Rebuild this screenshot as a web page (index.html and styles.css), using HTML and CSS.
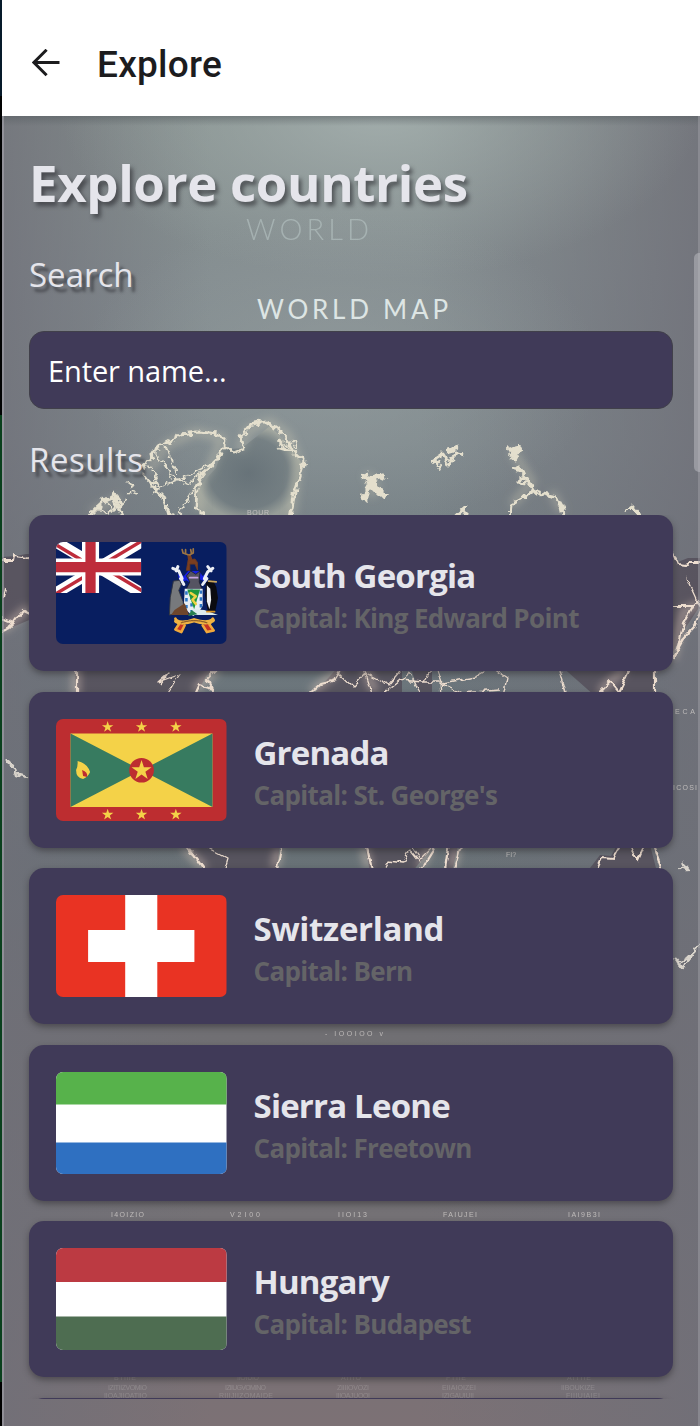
FILE: index.html
```html
<!DOCTYPE html>
<html lang="en">
<head>
<meta charset="utf-8">
<title>Explore</title>
<link rel="stylesheet" href="styles.css">
</head>
<body>
<div class="screen">
  <header class="appbar">
    <svg class="back" viewBox="0 0 28 28" width="28" height="28"><path d="M27.500 13.500H2.500M14.600 .800L1.900 13.500L14.600 26.200" fill="none" stroke="#1c1c1e" stroke-width="3"/></svg>
    <h1 class="appbar-title">Explore</h1>
  </header>
  <main class="content">
    <svg class="map" viewBox="0 116 700 1310" width="700" height="1310" aria-hidden="true">
      <defs>
        <linearGradient id="base" x1="0" y1="0" x2="0" y2="1">
          <stop offset="0" stop-color="#87928f"/><stop offset=".12" stop-color="#848d90"/><stop offset=".25" stop-color="#7f898d"/><stop offset=".42" stop-color="#6c767c"/><stop offset=".58" stop-color="#687176"/><stop offset=".7" stop-color="#706f73"/><stop offset=".84" stop-color="#747175"/><stop offset="1" stop-color="#7c7175"/>
        </linearGradient>
        <linearGradient id="edge" x1="0" y1="0" x2="1" y2="0">
          <stop offset="0" stop-color="#6f6f78" stop-opacity=".75"/><stop offset=".3" stop-color="#6f6f78" stop-opacity="0"/><stop offset=".6" stop-color="#6f6f78" stop-opacity="0"/><stop offset="1" stop-color="#6f6f78" stop-opacity=".8"/>
        </linearGradient>
        <radialGradient id="lamp" gradientUnits="userSpaceOnUse" cx="0" cy="0" r="1" gradientTransform="translate(380 110) scale(320 170)">
          <stop offset="0" stop-color="#a9b4b3" stop-opacity=".8"/><stop offset="1" stop-color="#a0aaab" stop-opacity="0"/>
        </radialGradient>
        <radialGradient id="mid" gradientUnits="userSpaceOnUse" cx="0" cy="0" r="1" gradientTransform="translate(340 370) scale(260 160)">
          <stop offset="0" stop-color="#99a2a3" stop-opacity=".55"/><stop offset="1" stop-color="#99a2a3" stop-opacity="0"/>
        </radialGradient>
        <linearGradient id="shade" x1="0" y1="0" x2="0" y2="1"><stop offset="0" stop-color="#555c60" stop-opacity=".5"/><stop offset="1" stop-color="#555c60" stop-opacity="0"/></linearGradient>
        <radialGradient id="sea"><stop offset="0" stop-color="#5d6970"/><stop offset=".75" stop-color="#6f7a7e"/><stop offset="1" stop-color="#a3a89f"/></radialGradient>
        <filter id="rough" x="-10%" y="-10%" width="120%" height="120%"><feTurbulence type="fractalNoise" baseFrequency=".16" numOctaves="2" seed="4"/><feDisplacementMap in="SourceGraphic" scale="9" xChannelSelector="R" yChannelSelector="G"/></filter>
        <filter id="wavy" x="-5%" y="-5%" width="110%" height="110%"><feTurbulence type="fractalNoise" baseFrequency=".12" numOctaves="2" seed="9"/><feDisplacementMap in="SourceGraphic" scale="6" xChannelSelector="R" yChannelSelector="G"/></filter>
        <filter id="glow" x="-20%" y="-20%" width="140%" height="140%"><feGaussianBlur stdDeviation="4"/></filter>
      </defs>
      <rect y="116" width="700" height="1310" fill="url(#base)"/>
      <rect y="116" width="700" height="1310" fill="url(#edge)"/>
      <rect y="116" width="700" height="320" fill="url(#lamp)"/>
      <rect y="200" width="700" height="330" fill="url(#mid)"/>
      <rect y="116" width="700" height="10" fill="url(#shade)"/>
      <text class="ghost faint" x="246" y="240" textLength="123">WORLD</text>
      <text class="ghost" x="257" y="319" textLength="191">WORLD MAP</text>

      <path fill="url(#sea)" fill-opacity=".7" d="M200 520L196 490L216 468L222 450L242 448L270 426L290 446L301 462L292 520Z"/>
      <g fill="none" stroke="#d4cfb9" stroke-opacity=".4" stroke-width="7" filter="url(#glow)">
        <path d="M150 470L166 445L196 432L222 438L210 468L198 485L200 510M240 450L248 430L270 422L288 435L298 460L292 515M366 474L376 486L370 496M512 450L532 482L512 505M552 492L562 512M92 512L120 498"/>
      </g>
      <g fill="none" stroke="#e4dfcd" stroke-linejoin="round" filter="url(#rough)">
        <path stroke-width="2.800" d="M88 520Q97 502 114 498L124 520M143 468L156 449L173 440L181 434L198 432L219 434L225 441L222 453L210 467L201 475L197 489L196 507L205 516M224 446L236 452L244 449L241 436L250 425L265 421L281 432L289 443L294 454L304 461L298 482L294 494L291 520M102 502L114 494L121 505M144 474L154 487L164 497L170 518M278 439L286 451M279 448L293 452"/>
        <path stroke-width="1.600" d="M154 452L162 460L172 477L190 484L202 472M166 447L177 473M174 520L200 481L219 455M156 488L187 476L215 462M148 465L158 477L151 486L164 500L173 518M101 498L114 510L126 500M92 516L100 508L108 516L116 506M126 482L134 488M128 492L138 494M148 480L160 486L152 494M286 446L294 440L296 450M282 442L298 456"/>
        <path stroke-width="6" d="M361 474L370 479L385 475M373 479L366 492L364 501M370 482L386 498M507 451L519 448L514 458"/>
        <path stroke-width="3" d="M434 458L440 466L438 471M431 462L443 454L450 465L456 452L464 455M445 451L459 447M507 448L515 459M512 468L525 472L519 482L534 484M516 466L527 479L534 491L543 494L557 497L562 506L565 520M536 490L525 496L511 504L510 520M452 520L466 507L464 518M625 512L632 507L640 516"/>
      </g>

      <g fill="#514b57" fill-opacity=".75"><path d="M2 557L16 556L26 554H34V618L15 626L2 630ZM668 546L678 562L688 558H700V606L684 630L668 662ZM75 665H220L206 676L196 696H76ZM340 665H402V696H312ZM410 665H432V696H420ZM560 665H655V696H595ZM184 845L206 872H276L280 845ZM365 845L370 872H412L434 845ZM448 845L444 872H452L458 845ZM587 872L600 855L611 856L617 845H650L657 872Z"/></g>
      <g fill="none" stroke="#ecd5c5" stroke-width="8" stroke-opacity=".45" filter="url(#glow)"><path d="M76 665V696M218 668L195 690M340 668L312 692M365 668L375 692M600 692L625 668M184 847L205 869M279 847L275 868M364 847L369 868M430 847L420 868M457 847L452 868M672 659L684 611L700 604M2 630L28 608"/></g>
      <g fill="none" stroke="#edddcf" stroke-width="2.200" stroke-linejoin="round" filter="url(#wavy)">
        <path d="M2 560H13L14 555L22 556L24 559L34 557M0 632Q10 630 17 618L24 610L34 615M6 588L4 599M2 618L12 622L8 629M670 546L678 565L686 566L690 561H704M670 606H693L684 623L674 660M693 606L698 601L702 608L694 627L683 639L670 661M77 662V700M224 662L207 679L212 689L199 685L192 700M306 698L321 684L333 681L345 662M592 700L610 681L619 692L634 662M655 662V700M184 842L209 876M282 842L276 876M366 842L373 876M438 842L422 868L412 876M449 842L444 876M462 842L452 876M583 873L597 869L602 858L613 859L622 842M628 842L638 860L646 842M652 842L664 876"/>
        <path stroke-width="1.300" d="M160 684L168 673L158 682L180 674L165 696M338 673L353 687L366 673L389 685L406 665M363 665L373 696M380 696L400 680L423 682L431 668M403 682L409 672L422 696M420 682H440L441 696M436 665L442 683L475 677L491 668M440 683L462 693L500 690M488 665L507 678L503 696M560 670L567 696M207 847L228 858L224 872M382 872L388 861L403 863L410 850L420 862M412 847L420 859L431 848M686 577L698 603"/>
      </g>
      <g fill="none" stroke="#d8d3cb" stroke-width="2.500" stroke-linejoin="round" filter="url(#rough)"><path d="M6 760L13 767L15 774L29 778M677 964L687 958L706 939M675 959L682 968L694 954M680 868L688 870L683 863"/></g>
      <g class="caption">
        <text x="247" y="515" textLength="22">BQUR</text><text x="675" y="714" textLength="20">ECA</text><text x="673" y="790" textLength="24">ICOSI</text><text x="506" y="857">FI?</text><text x="325" y="1036" textLength="58">- IOOIOO v</text>
        <text x="111" y="1217" textLength="33">I4OIZIO</text><text x="230" y="1217" textLength="30">V2I00</text><text x="338" y="1217" textLength="29">IIOI13</text><text x="443" y="1217" textLength="34">FAIUJEI</text><text x="568" y="1217" textLength="32">IAI9B3I</text>
      </g>
      <g class="caption dim">
        <text x="114" y="1380" textLength="22">BTIIIE</text><text x="237" y="1380" textLength="22">IIOIUIO</text><text x="341" y="1380" textLength="20">AIIIO</text><text x="446" y="1380" textLength="20">FTIIE</text><text x="567" y="1380" textLength="24">AITIIE</text>
        <text x="108" y="1390" textLength="39">IZITIIZVOMIO</text><text x="225" y="1390" textLength="41">IZIIUGVOMINO</text><text x="337" y="1390" textLength="32">ZIIIIOVOZI</text><text x="442" y="1390" textLength="34">EIIAIOIZEI</text><text x="561" y="1390" textLength="34">IIBOUKIZE</text>
        <text x="104" y="1398" textLength="43">IIOAJIIOATIIO</text><text x="219" y="1398" textLength="54">RIIIJIIZOMAIDE</text><text x="336" y="1398" textLength="34">IIIOAJUOOI</text><text x="442" y="1398" textLength="32">IZIGAUIUII</text><text x="566" y="1398" textLength="34">FIIIUIAIEI</text>
      </g>
      <rect x="2" y="116" width="2" height="1310" fill="#a5a4ab" fill-opacity=".6"/>
      <rect x="698" y="116" width="2" height="1310" fill="#a5a4ab" fill-opacity=".45"/>
    </svg>
    <h2 class="title">Explore countries</h2>
    <p class="label search-label">Search</p>
    <div class="field">Enter name...</div>
    <p class="label results-label">Results</p>
    <div class="list">
      <article class="card">
        <svg class="flag" viewBox="0 0 200 120" preserveAspectRatio="none">
          <path fill="#081e60" d="M0 0H200V120H0Z"/>
          <svg width="100" height="60" viewBox="0 0 100 60" preserveAspectRatio="none"><path stroke="#fff" stroke-width="13" d="M0 0L100 60M100 0L0 60"/><path stroke="#be2c3b" stroke-width="4" d="M-2 2L48 32M102 -2L52 28M52 28L102 58M48 32L-2 62"/><path stroke="#fff" stroke-width="20" d="M40.500 0V60M0 29.500H100"/><path stroke="#be2c3b" stroke-width="12" d="M40.500 0V60M0 29.500H100"/></svg>
          <g stroke-linecap="round" stroke-linejoin="round">
            <path d="M153 33L155 21L163 20L166 24L166 33L163 26L157 26L157 33Z" fill="#7a3e20" stroke="#6b3a20"/>
            <path d="M155 22L154 14L158 14L160 21Z" fill="#7a3e20"/>
            <path d="M155 15L149 13L148 9M152 14L152 9M157 15L161 13L161 8M159 14L158 9" fill="none" stroke="#9c7544" stroke-width="2"/>
            <path d="M145 48L143 38L150 40L155 34H168L172 40L178 36L177 47L169 44L161 50L153 45Z" fill="#1520e4"/>
            <path d="M148 43L144 34L137 31M174 43L178 35L184 31M150 50L146 43M172 50L177 43M141 34L143 29M182 34L178 29" fill="none" stroke="#eceff5" stroke-width="3.500"/>
            <path d="M153 55L157 47L153 40L158 34L164 38L169 34L168 47L171 55Z" fill="#555462" stroke="#20212d"/><path d="M157 42H166" stroke="#c5a4df" stroke-width="2"/>
            <path d="M151 55H172V75Q169 82 161 87Q153 82 150 75Z" fill="#e9eff4"/>
            <path d="M153 58V80M159 56V82M170 57V78" stroke="#2d76c4" stroke-width="3" stroke-dasharray="4 4" stroke-linecap="butt"/><path d="M154 56H169L162 79Z" fill="#1e963c"/><path d="M158 60L164 64L160 68L164 73" fill="none" stroke="#efd246" stroke-width="3"/>
            <path d="M138 46L145 45L147 50L144 57L149 70L151 82L133 86L134 66Z" fill="#77797c" stroke="#34363c"/><path d="M139 80L151 72L156 86H135Z" fill="#6e462c"/>
            <path d="M157 86L161 79L174 80L190 86Z" fill="#dcebec"/><path d="M155 87L159 80L166 85Z" fill="#278050"/>
            <path d="M176 47L184 45L188 53L190 66L187 81H178L175 63Z" fill="#0b0b10"/><path d="M177 51L181 55L182 68L180 79L177 70Z" fill="#f0f2f3"/><path d="M179 46L188 47" stroke="#caa65d" stroke-width="2"/><path d="M177 82H186" stroke="#d99422" stroke-width="2"/>
            <path d="M140 90L144 97L140 103L147 106L151 98M184 90L180 97L185 104L177 106L172 98" fill="#c63225" stroke="#f0a83a" stroke-width="3"/><path d="M141 93Q148 97 162 92Q177 97 184 92" fill="none" stroke="#eeb243" stroke-width="5"/><path d="M147 95Q162 90 177 95" fill="none" stroke="#8f602a" stroke-width="1.500" stroke-dasharray="2 1"/>
          </g>
        </svg>
        <div class="info"><h3 class="name">South Georgia</h3><p class="capital">Capital: King Edward Point</p></div>
      </article>
      <article class="card">
        <svg class="flag" viewBox="0 0 170 102" preserveAspectRatio="none">
          <defs><path id="star" d="M0 -1L.225 -.309H.951L.363 .118L.588 .809L0 .382L-.588 .809L-.363 .118L-.951 -.309H-.225Z"/></defs>
          <path fill="#bd2d30" d="M0 0H170V102H0Z"/><path fill="#f4d248" d="M14.500 14.500H156V88H14.500Z"/><path fill="#377b60" d="M14.500 14.500L85.300 51.300L14.500 88ZM156 14.500L85.300 51.300L156 88Z"/><circle cx="85.300" cy="51.300" r="12.300" fill="#bd2d30"/>
          <g fill="#f4d248"><use href="#star" transform="translate(85.300 51.500) scale(10.500)"/><use href="#star" transform="translate(51.500 8) scale(6)"/><use href="#star" transform="translate(85.300 8) scale(6)"/><use href="#star" transform="translate(119.500 8) scale(6)"/><use href="#star" transform="translate(51.500 95.700) scale(6)"/><use href="#star" transform="translate(85.300 95.700) scale(6)"/><use href="#star" transform="translate(119.500 95.700) scale(6)"/><path d="M21.500 42Q31 44 34 53Q32 58 27 60Q20 59 20 51Q22 47 21.500 42Z"/></g><path d="M26 51Q32 53 31 58L27 57Z" fill="#bd2d30"/>
        </svg>
        <div class="info"><h3 class="name">Grenada</h3><p class="capital">Capital: St. George's</p></div>
      </article>
      <article class="card">
        <svg class="flag" viewBox="0 0 170 102" preserveAspectRatio="none"><path fill="#e93323" d="M0 0H170V102H0Z"/><path fill="#fff" d="M69 0H101V35H138V67H101V102H69V67H32V35H69Z"/></svg>
        <div class="info"><h3 class="name wide">Switzerland</h3><p class="capital">Capital: Bern</p></div>
      </article>
      <article class="card">
        <svg class="flag" viewBox="0 0 170 102" preserveAspectRatio="none"><path fill="#fff" d="M0 0H170V102H0Z"/><path fill="#57b24b" d="M0 0H170V32.500H0Z"/><path fill="#2f70c1" d="M0 70.500H170V102H0Z"/></svg>
        <div class="info"><h3 class="name">Sierra Leone</h3><p class="capital">Capital: Freetown</p></div>
      </article>
      <article class="card">
        <svg class="flag" viewBox="0 0 170 102" preserveAspectRatio="none"><path fill="#fff" d="M0 0H170V102H0Z"/><path fill="#bc3a42" d="M0 0H170V34H0Z"/><path fill="#4e6d51" d="M0 68.500H170V102H0Z"/></svg>
        <div class="info"><h3 class="name">Hungary</h3><p class="capital">Capital: Budapest</p></div>
      </article>
      <article class="card"></article>
    </div>
    <div class="scrollbar"></div>
  </main>
</div>
</body>
</html>
```
FILE: styles.css
```css
* { box-sizing: border-box; }
html, body, h1, h2, h3, p { margin: 0; padding: 0; }
body { background: #07120f; font-family: "Open Sans", "Noto Sans", sans-serif; }
.screen { width: 700px; height: 1426px; overflow: hidden; padding-left: 2px; background: linear-gradient(#071a2a 0 96px, #020303 96px 415px, #0a401d 415px 1382px, #000 1382px); display: flex; flex-direction: column; }
.appbar { height: 116px; flex: none; background: #fff; display: flex; align-items: flex-start; padding: 49px 0 0 30px; gap: 37px; }
.back { flex: none; display: block; }
.appbar-title { font: 500 37px/42px Roboto, sans-serif; color: #1c1c1e; margin-top: -5px; letter-spacing: .25px; }
.content { position: relative; flex: 1; overflow: hidden; padding: 36px 27px 0; }
.map { position: absolute; left: -2px; top: 0; }
.ghost { font: 400 26px Lato, sans-serif; fill: #dde5e4; }
.faint { font-size: 29px; font-weight: 300; fill: #bccac9; opacity: .55; }
.caption { font: 7px "Liberation Sans", sans-serif; fill: #cbc7c5; opacity: .85; }
.dim { opacity: .28; }
.title, .label, .field, .list { position: relative; }
.title { font-size: 51px; line-height: 60px; font-weight: 700; color: #e5e5eb; text-shadow: 3px 4px 4px rgba(40, 40, 45, .6); letter-spacing: -.38px; white-space: nowrap; }
.label { font-size: 33px; line-height: 44px; color: #e5e5eb; text-shadow: 4px 5px 3px rgba(40, 40, 45, .6); }
.search-label { margin-top: 41px; }
.results-label { margin-top: 29px; letter-spacing: .55px; }
.field { margin-top: 34px; height: 78px; border: 1.500px solid #41404a; border-radius: 15px; background: #403a58; color: #fff; font-size: 29px; line-height: 77px; padding-left: 18px; letter-spacing: -.1px; }
.list { margin: 33px -7px 0; padding: 0 7px; height: 884px; overflow: hidden; display: flex; flex-direction: column; gap: 20.250px; }
.card { flex: none; height: 156.250px; background: #403a58; border-radius: 15px; box-shadow: 0 3px 6px rgba(40, 38, 42, .5); display: flex; align-items: center; padding: 0 27px; gap: 27px; }
.flag { width: 170.500px; height: 102px; border-radius: 7px; flex: none; display: block; overflow: hidden; }
.info { white-space: nowrap; padding-top: 6px; }
.name { font-size: 33px; line-height: 44px; font-weight: 700; color: #e5e5eb; letter-spacing: -.8px; }
.name.wide { letter-spacing: -.3px; }
.capital { font-size: 26px; line-height: 40px; font-weight: 700; color: #646467; letter-spacing: -.65px; }
.scrollbar { position: absolute; right: 0; top: 137px; width: 6px; height: 219px; border-radius: 5px 0 0 5px; background: rgba(190, 190, 196, .5); }
```
